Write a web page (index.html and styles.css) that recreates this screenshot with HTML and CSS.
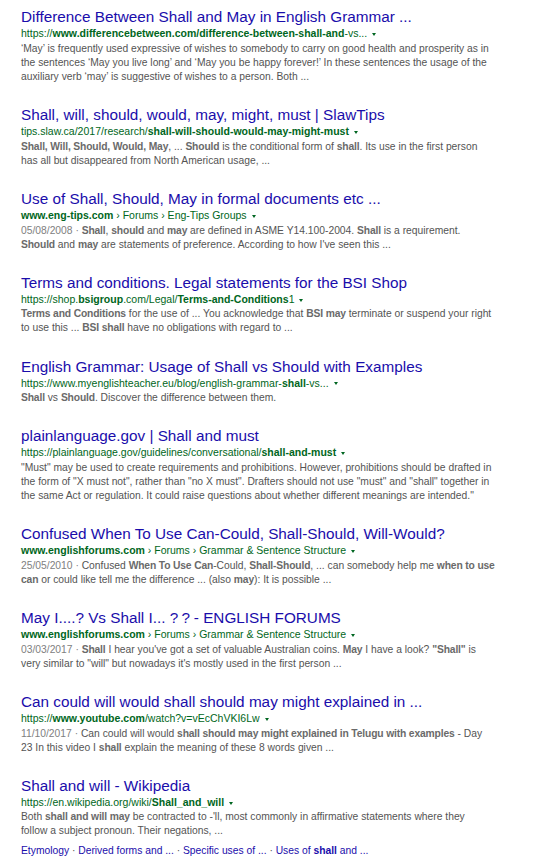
FILE: index.html
```html
<!DOCTYPE html>
<html lang="en">
<head>
<meta charset="utf-8">
<title>Search results</title>
<link rel="stylesheet" href="styles.css">
</head>
<body>
<div class="results">

  <div class="result">
    <a class="title" href="#">Difference Between Shall and May in English Grammar ...</a>
    <div class="url"><span>https://<b>www.differencebetween.com/difference-between-shall-and</b>-vs...</span><i class="arrow"></i></div>
    <div class="snippet">‘May’ is frequently used expressive of wishes to somebody to carry on good health and prosperity as in<br>the sentences ‘May you live long’ and ‘May you be happy forever!’ In these sentences the usage of the<br>auxiliary verb ‘may’ is suggestive of wishes to a person. Both ...</div>
  </div>

  <div class="result">
    <a class="title" href="#">Shall, will, should, would, may, might, must | SlawTips</a>
    <div class="url"><span>tips.slaw.ca/2017/research/<b>shall-will-should-would-may-might-must</b></span><i class="arrow"></i></div>
    <div class="snippet"><em>Shall, Will, Should, Would, May</em>, ... <em>Should</em> is the conditional form of <em>shall</em>. Its use in the first person<br>has all but disappeared from North American usage, ...</div>
  </div>

  <div class="result">
    <a class="title" href="#">Use of Shall, Should, May in formal documents etc ...</a>
    <div class="url"><span><b>www.eng-tips.com</b> › Forums › Eng-Tips Groups</span><i class="arrow"></i></div>
    <div class="snippet"><span class="date">05/08/2008 · </span><em>Shall</em>, <em>should</em> and <em>may</em> are defined in ASME Y14.100-2004. <em>Shall</em> is a requirement.<br><em>Should</em> and <em>may</em> are statements of preference. According to how I've seen this ...</div>
  </div>

  <div class="result">
    <a class="title" href="#">Terms and conditions. Legal statements for the BSI Shop</a>
    <div class="url"><span>https://shop.<b>bsigroup</b>.com/Legal/<b>Terms-and-Conditions</b>1</span><i class="arrow"></i></div>
    <div class="snippet"><em>Terms and Conditions</em> for the use of ... You acknowledge that <em>BSI may</em> terminate or suspend your right<br>to use this ... <em>BSI shall</em> have no obligations with regard to ...</div>
  </div>

  <div class="result">
    <a class="title" href="#">English Grammar: Usage of Shall vs Should with Examples</a>
    <div class="url"><span>https://www.myenglishteacher.eu/blog/english-grammar-<b>shall</b>-vs...</span><i class="arrow"></i></div>
    <div class="snippet"><em>Shall</em> vs <em>Should</em>. Discover the difference between them.</div>
  </div>

  <div class="result">
    <a class="title" href="#">plainlanguage.gov | Shall and must</a>
    <div class="url"><span>https://plainlanguage.gov/guidelines/conversational/<b>shall-and-must</b></span><i class="arrow"></i></div>
    <div class="snippet">"Must" may be used to create requirements and prohibitions. However, prohibitions should be drafted in<br>the form of "X must not", rather than "no X must". Drafters should not use "must" and "shall" together in<br>the same Act or regulation. It could raise questions about whether different meanings are intended."</div>
  </div>

  <div class="result">
    <a class="title" href="#">Confused When To Use Can-Could, Shall-Should, Will-Would?</a>
    <div class="url"><span><b>www.englishforums.com</b> › Forums › Grammar &amp; Sentence Structure</span><i class="arrow"></i></div>
    <div class="snippet"><span class="date">25/05/2010 · </span>Confused <em>When To Use Can</em>-Could, <em>Shall-Should</em>, ... can somebody help me <em>when to use</em><br><em>can</em> or could like tell me the difference ... (also <em>may</em>): It is possible ...</div>
  </div>

  <div class="result">
    <a class="title" href="#">May I....? Vs Shall I... <span class="tight">? ?</span> - ENGLISH FORUMS</a>
    <div class="url"><span><b>www.englishforums.com</b> › Forums › Grammar &amp; Sentence Structure</span><i class="arrow"></i></div>
    <div class="snippet"><span class="date">03/03/2017 · </span><em>Shall</em> I hear you've got a set of valuable Australian coins. <em>May</em> I have a look? <em>"Shall"</em> is<br>very similar to "will" but nowadays it's mostly used in the first person ...</div>
  </div>

  <div class="result">
    <a class="title" href="#">Can could will would shall should may might explained in ...</a>
    <div class="url"><span>https://<b>www.youtube.com</b>/watch?v=vEcChVKI6Lw</span><i class="arrow"></i></div>
    <div class="snippet"><span class="date">11/10/2017 · </span>Can could will would <em>shall should may might explained in Telugu with examples</em> - Day<br>23 In this video I <em>shall</em> explain the meaning of these 8 words given ...</div>
  </div>

  <div class="result">
    <a class="title" href="#">Shall and will - Wikipedia</a>
    <div class="url"><span>https://en.wikipedia.org/wiki/<b>Shall_and_will</b></span><i class="arrow"></i></div>
    <div class="snippet">Both <em>shall and will may</em> be contracted to -'ll, most commonly in affirmative statements where they<br>follow a subject pronoun. Their negations, ...</div>
    <div class="sitelinks"><a href="#">Etymology</a><span class="sep"> · </span><a href="#">Derived forms and ...</a><span class="sep"> · </span><a href="#">Specific uses of ...</a><span class="sep"> · </span><a href="#">Uses of <b>shall</b> and ...</a></div>
  </div>

</div>
</body>
</html>
```

FILE: styles.css
```css
html, body {
  margin: 0;
  padding: 0;
  background: #ffffff;
}

body {
  font-family: Arial, "Liberation Sans", sans-serif;
}

.results {
  padding: 7.2px 0 0 21px;
  width: 500px;
}

.result {
  margin-bottom: 21.2px;
}

.title {
  display: block;
  font-size: 15.3px;
  line-height: 19px;
  color: #1a0dab;
  text-decoration: none;
  white-space: nowrap;
}

.tight {
  letter-spacing: -0.5px;
}

.url {
  display: flex;
  align-items: center;
  font-size: 10.5px;
  line-height: 15.66px;
  color: #006621;
  white-space: nowrap;
}

.url b {
  font-weight: bold;
}

.arrow {
  display: block;
  width: 0;
  height: 0;
  margin-left: 5px;
  margin-top: 1px;
  border-left: 2.5px solid transparent;
  border-right: 2.5px solid transparent;
  border-top: 3.5px solid #006621;
}

.snippet {
  font-size: 10.3px;
  line-height: 14px;
  color: #545454;
  white-space: nowrap;
}

.snippet em {
  font-style: normal;
  font-weight: bold;
  color: #6a6a6a;
  letter-spacing: -0.15px;
}

.date {
  color: #808080;
}

.sitelinks {
  margin-top: 5.5px;
  font-size: 10.3px;
  line-height: 14px;
  color: #545454;
  white-space: nowrap;
}

.sitelinks a {
  color: #1a0dab;
  text-decoration: none;
}

.sitelinks b {
  font-weight: bold;
}
```
